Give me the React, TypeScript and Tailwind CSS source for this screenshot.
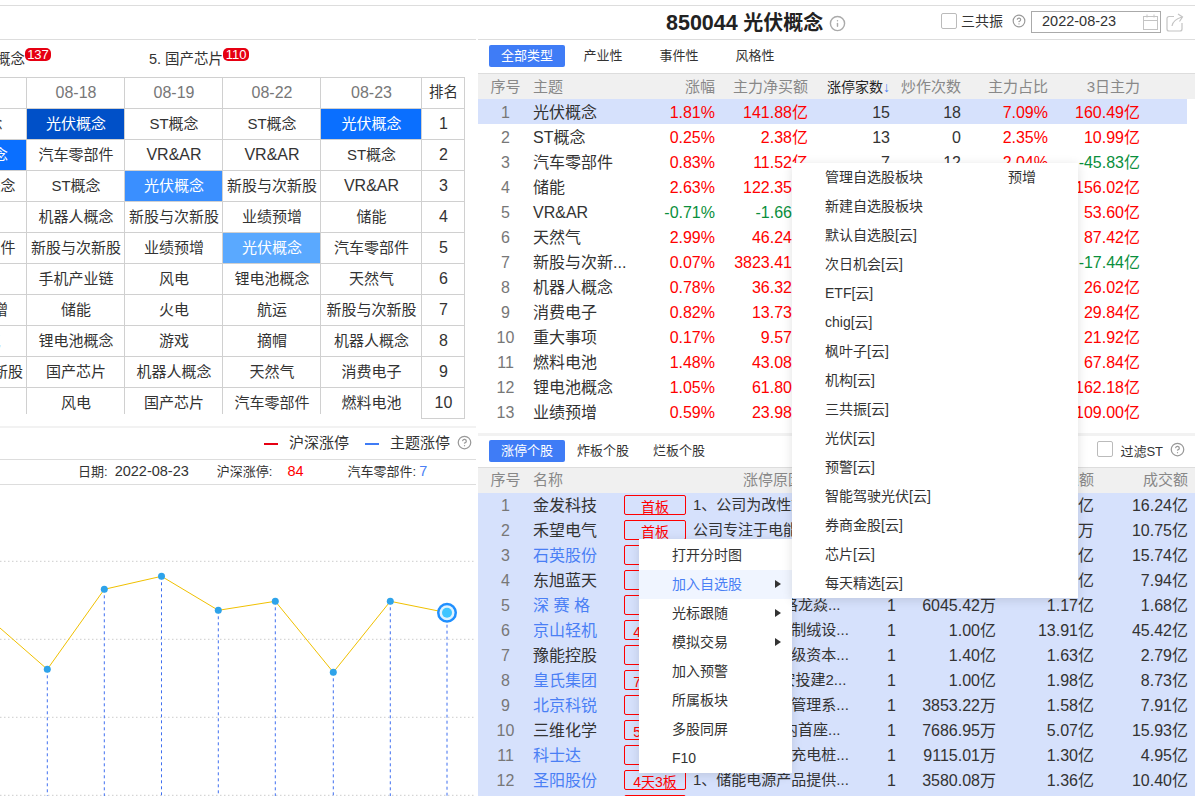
import React from 'react';
import { CircleHelp, Info } from 'lucide-react';

const RED = 'text-[#ff0000]';
const GREEN = 'text-[#0a8f3c]';
const BLUE = 'text-[#4a7ff5]';

const grid = [
  ['08-17', '08-18', '08-19', '08-22', '08-23', '排名'],
  ['ST概念', '光伏概念', 'ST概念', 'ST概念', '光伏概念', '1'],
  ['光伏概念', '汽车零部件', 'VR&AR', 'VR&AR', 'ST概念', '2'],
  ['锂电池概念', 'ST概念', '光伏概念', '新股与次新股', 'VR&AR', '3'],
  ['储能', '机器人概念', '新股与次新股', '业绩预增', '储能', '4'],
  ['汽车零部件', '新股与次新股', '业绩预增', '光伏概念', '汽车零部件', '5'],
  ['风电', '手机产业链', '风电', '锂电池概念', '天然气', '6'],
  ['业绩预增', '储能', '火电', '航运', '新股与次新股', '7'],
  ['天然气', '锂电池概念', '游戏', '摘帽', '机器人概念', '8'],
  ['新股与次新股', '国产芯片', '机器人概念', '天然气', '消费电子', '9'],
  ['火电', '风电', '国产芯片', '汽车零部件', '燃料电池', '10'],
];

const cellFill: Record<string, string> = {
  '1-1': 'bg-[#0050c8] text-white',
  '1-4': 'bg-[#0a6fff] text-white',
  '2-0': 'bg-[#0a6fff] text-white',
  '3-2': 'bg-[#3a8fff] text-white',
  '5-3': 'bg-[#5aa9ff] text-white',
};

const themes = [
  ['光伏概念', '1.81%', '141.88亿', '15', '18', '7.09%', '160.49亿'],
  ['ST概念', '0.25%', '2.38亿', '13', '0', '2.35%', '10.99亿'],
  ['汽车零部件', '0.83%', '11.52亿', '7', '12', '2.04%', '-45.83亿'],
  ['储能', '2.63%', '122.35亿', '6', '9', '3.12%', '156.02亿'],
  ['VR&AR', '-0.71%', '-1.66亿', '6', '0', '1.20%', '53.60亿'],
  ['天然气', '2.99%', '46.24亿', '5', '4', '2.66%', '87.42亿'],
  ['新股与次新...', '0.07%', '3823.41万', '5', '2', '0.30%', '-17.44亿'],
  ['机器人概念', '0.78%', '36.32亿', '4', '3', '1.41%', '26.02亿'],
  ['消费电子', '0.82%', '13.73亿', '4', '1', '1.02%', '29.84亿'],
  ['重大事项', '0.17%', '9.57亿', '4', '0', '0.85%', '21.92亿'],
  ['燃料电池', '1.48%', '43.08亿', '3', '5', '2.48%', '67.84亿'],
  ['锂电池概念', '1.05%', '61.80亿', '3', '8', '1.96%', '162.18亿'],
  ['业绩预增', '0.59%', '23.98亿', '3', '2', '1.11%', '109.00亿'],
];

const stocks = [
  ['金发科技', 0, '首板', '1、公司为改性塑料龙头', '1', '9856.20万', '2.14亿', '16.24亿'],
  ['禾望电气', 0, '首板', '公司专注于电能变换', '1', '8120.33万', '3512万', '10.75亿'],
  ['石英股份', 1, '首板', '公司高纯石英砂龙头', '1', '1.12亿', '2.06亿', '15.74亿'],
  ['东旭蓝天', 0, '首板', '公司布局光伏电站', '1', '7220.10万', '1.35亿', '7.94亿'],
  ['深 赛 格', 1, '首板', '公司参股苏州格龙焱...', '1', '6045.42万', '1.17亿', '1.68亿'],
  ['京山轻机', 1, '4天3板', '1、公司主营光制绒设...', '1', '1.00亿', '13.91亿', '45.42亿'],
  ['豫能控股', 0, '首板', '1、公司引入省级资本...', '1', '1.40亿', '1.63亿', '2.79亿'],
  ['皇氏集团', 1, '7天5板', '1、公司拟 在安投建2...', '1', '1.00亿', '1.98亿', '8.73亿'],
  ['北京科锐', 1, '首板', '1、公司布能源管理系...', '1', '3853.22万', '1.58亿', '7.91亿'],
  ['三维化学', 0, '5天3板', '公司承建了国内首座...', '1', '7686.95万', '5.07亿', '15.93亿'],
  ['科士达', 1, '首板', '1、公司布局储充电桩...', '1', '9115.01万', '1.30亿', '4.95亿'],
  ['圣阳股份', 1, '4天3板', '1、储能电源产品提供...', '1', '3580.08万', '1.36亿', '10.40亿'],
] as const;

const mainMenu = ['打开分时图', '加入自选股', '光标跟随', '模拟交易', '加入预警', '所属板块', '多股同屏', 'F10'];
const subMenu = ['管理自选股板块', '新建自选股板块', '默认自选股[云]', '次日机会[云]', 'ETF[云]', 'chig[云]', '枫叶子[云]', '机构[云]', '三共振[云]', '光伏[云]', '预警[云]', '智能驾驶光伏[云]', '券商金股[云]', '芯片[云]', '每天精选[云]'];

const points = [[47.3, 184.3], [104.3, 104.3], [161.5, 91.3], [218.3, 125.3], [275.3, 116.3], [333.3, 187.3], [390.3, 116.3], [447, 127.7]];

function signColor(v: string) {
  return v.startsWith('-') ? GREEN : RED;
}

function Badge({ count }: { count: string }) {
  return <span className="absolute left-full -top-[1px] h-[13px] w-[26px] rounded-[5px] bg-[#e60012] text-center text-[13px] leading-[13px] text-white">{count}</span>;
}

function Tabs({ items }: { items: string[] }) {
  return (
    <div className="flex">
      {items.map((t, i) => (
        <div key={t} className={`flex h-[22px] w-[76px] items-center justify-center rounded-[2px] text-[13px] ${i === 0 ? 'bg-[#3f7cf6] text-white' : 'text-[#333]'}`}>{t}</div>
      ))}
    </div>
  );
}

function CheckBox() {
  return <span className="mb-[3px] block h-[16px] w-[16px] rounded-[2px] border border-[#bbb] bg-white" />;
}

function Chart() {
  return (
    <svg width="476" height="311" className="block">
      {[76.3, 154.3, 232.3, 310.3].map(y => (
        <line key={y} x1="0" x2="476" y1={y} y2={y} stroke="#ccc" strokeDasharray="1.5 2.5" />
      ))}
      {points.map(([x, y]) => (
        <line key={x} x1={x} x2={x} y1={y} y2="311" stroke="#3f6ff0" strokeDasharray="3 3" />
      ))}
      <polyline points={`0,143 ${points.map(p => p.join(',')).join(' ')}`} fill="none" stroke="#f0c000" strokeWidth="1" />
      {points.slice(0, 7).map(([x, y]) => (
        <circle key={x} cx={x} cy={y} r="3.5" fill="#2ea3ea" />
      ))}
      <circle cx="447" cy="127.7" r="10" fill="#1f8fff" />
      <circle cx="447" cy="127.7" r="7.5" fill="#dff3ff" />
      <circle cx="447" cy="127.7" r="5" fill="#3fc5ff" />
    </svg>
  );
}

function LeftPanel() {
  return (
    <div className="flex w-[476px] flex-col overflow-hidden">
      <div className="h-[34px] shrink-0 border-b border-[#ddd]" />
      <div className="relative h-[37px] shrink-0 overflow-hidden text-[14.5px] text-[#333]">
        <span className="absolute right-[451px] top-[9px] whitespace-nowrap">4. 机器人概念<Badge count="137" /></span>
        <span className="absolute left-[149px] top-[9px] whitespace-nowrap">5. 国产芯片<Badge count="110" /></span>
      </div>
      <div className="ml-[-71px] h-[349px] shrink-0">
        <div className="grid w-[536px] grid-cols-[98px_98px_98px_98px_101px_43px] items-start border-t border-[#d0d0d0]">
          {grid.map((row, r) =>
            row.map((text, c) => {
              const isLast = r === 10;
              const isRank = c === 5;
              const head = r === 0 && !isRank;
              const wide = text === 'VR&AR';
              const size = head || wide || (isRank && r > 0) ? 'text-[16px]' : isRank ? 'text-[14.5px]' : 'text-[15px]';
              const fill = cellFill[`${r}-${c}`] ?? (head ? 'text-[#777]' : 'text-[#333]');
              const shape = isLast && !isRank ? 'h-[26px] pt-[4px] border-r' : 'h-[31px] items-center border-r border-b';
              return (
                <div key={`${r}-${c}`} className={`flex justify-center whitespace-nowrap border-[#d0d0d0] pl-[1px] ${shape} ${size} ${fill} ${isRank ? 'border-l border-l-[#d0d0d0] -ml-[1px]' : ''}`}>
                  {text}
                </div>
              );
            }),
          )}
        </div>
      </div>
      <div className="h-[2px] shrink-0 bg-[#f2f2f2]" />
      <div className="flex h-[32px] shrink-0 items-center justify-end border-b border-[#ddd] pr-[4px] text-[15px] text-[#333]">
        <span className="h-[2px] w-[14px] bg-[#e60012]" />
        <span className="ml-[11px]">沪深涨停</span>
        <span className="ml-[16px] h-[2px] w-[14px] bg-[#3f7cf6]" />
        <span className="ml-[11px]">主题涨停</span>
        <CircleHelp size={15} className="ml-[7px] mb-[3px] text-[#999]" />
      </div>
      <div className="flex h-[25px] shrink-0 items-center border-b border-[#ddd] pl-[78px] text-[13px] text-[#333]">
        <span>日期:</span>
        <span className="ml-[7px] text-[14.5px]">2022-08-23</span>
        <span className="ml-[28px]">沪深涨停:</span>
        <span className={`ml-[15px] text-[14.5px] ${RED}`}>84</span>
        <span className="ml-[44px]">汽车零部件:</span>
        <span className={`ml-[3px] text-[14.5px] ${BLUE}`}>7</span>
      </div>
      <Chart />
    </div>
  );
}

function ThemeTable() {
  const cols = 'grid grid-cols-[55px_92px_90px_93px_82px_71px_87px_92px] items-center pt-[2px]';
  return (
    <div className="h-[359px] shrink-0">
      <div className={`${cols} h-[25px] w-full bg-[#f0f0f0] text-[15px] text-[#888]`}>
        <span className="text-center">序号</span>
        <span>主题</span>
        <span className="text-right">涨幅</span>
        <span className="text-right">主力净买额</span>
        <span className="text-right text-[14px] text-[#222]">涨停家数<span className={`text-[14px] ${BLUE}`}>↓</span></span>
        <span className="text-right">炒作次数</span>
        <span className="text-right">主力占比</span>
        <span className="text-right">3日主力</span>
      </div>
      {themes.map((t, i) => (
        <div key={t[0]} className={`${cols} h-[25px] w-[709px] whitespace-nowrap text-[16px] text-[#333] ${i === 0 ? 'bg-[#d6e1fc]' : ''}`}>
          <span className="text-center text-[#777]">{i + 1}</span>
          <span>{t[0]}</span>
          <span className={`text-right ${signColor(t[1])}`}>{t[1]}</span>
          <span className={`text-right ${signColor(t[2])}`}>{t[2]}</span>
          <span className="text-right">{t[3]}</span>
          <span className="text-right">{t[4]}</span>
          <span className={`text-right ${signColor(t[5])}`}>{t[5]}</span>
          <span className={`text-right ${signColor(t[6])}`}>{t[6]}</span>
        </div>
      ))}
    </div>
  );
}

function StockTable() {
  const cols = 'grid grid-cols-[55px_91px_62px_166px_44px_100px_98px_94px_7px] items-center';
  return (
    <div>
      <div className={`${cols} h-[25px] bg-[#f0f0f0] text-[15px] text-[#888]`}>
        <span className="text-center">序号</span>
        <span>名称</span>
        <span />
        <span className="pl-[57px]">涨停原因</span>
        <span className="text-right">连板</span>
        <span className="text-right">封单额</span>
        <span className="text-right">流通额</span>
        <span className="text-right">成交额</span>
      </div>
      {stocks.map((s, i) => (
        <div key={s[0]} className={`${cols} h-[25px] whitespace-nowrap bg-[#d6e1fc] text-[16px] text-[#333]`}>
          <span className="text-center text-[#777]">{i + 1}</span>
          <span className={s[1] ? BLUE : ''}>{s[0]}</span>
          <span className={`mb-[1px] h-[20px] overflow-hidden rounded-[2px] border border-[#f00] text-center text-[14px] leading-[23px] ${RED}`}>{s[2]}</span>
          <span className="pl-[7px] text-[15px]">{s[3]}</span>
          <span className="text-right">{s[4]}</span>
          <span className="text-right">{s[5]}</span>
          <span className="text-right">{s[6]}</span>
          <span className="text-right">{s[7]}</span>
        </div>
      ))}
      <div className="h-[25px] bg-[#d6e1fc] pl-[146px] pt-[2px]">
        <div className="h-[20px] w-[62px] rounded-[2px] border border-[#f00]" />
      </div>
    </div>
  );
}

function RightPanel() {
  return (
    <div className="flex w-[717px] flex-col overflow-hidden">
      <div className="flex h-[34px] shrink-0 items-center border-b border-[#ddd] pr-[11px]">
        <span className="ml-[188px] whitespace-nowrap pt-[2px] text-[20px] font-bold text-[#222]"><span className="text-[21.5px]">850044</span> 光伏概念</span>
        <Info size={17} className="ml-[6px] mt-[2px] text-[#aaa]" />
        <div className="ml-auto flex items-center">
          <CheckBox />
          <span className="mb-[2px] ml-[4px] text-[14px] text-[#333]">三共振</span>
          <CircleHelp size={14} className="mb-[3px] ml-[9px] text-[#999]" />
          <div className="mb-[2px] ml-[5px] flex h-[22px] w-[130px] items-center justify-between border border-[#aaa] pl-[10px] pr-[2px] text-[14.5px] text-[#333]">
            2022-08-23
            <svg width="15" height="16" viewBox="0 0 15 16" fill="none" stroke="#c4c4c4">
              <rect x="0.5" y="2.5" width="14" height="13" />
              <path d="M0.5 6.5h14M4 0.5v3M11 0.5v3" />
            </svg>
          </div>
          <svg width="18" height="19" viewBox="0 0 18 19" fill="none" stroke="#c4c4c4" strokeWidth="1.2" className="ml-[5px]">
            <path d="M8 3.5H3a2 2 0 0 0-2 2v10.500a2 2 0 0 0 2 2h11a2 2 0 0 0 2-2V10" />
            <path d="M6 13c.5-4 3.500-7 10-9M12 1l4.500 3-3 4.500" />
          </svg>
        </div>
      </div>
      <div className="flex h-[34px] shrink-0 items-start border-b border-[#ddd] pl-[11px] pt-[5px]">
        <Tabs items={['全部类型', '产业性', '事件性', '风格性']} />
      </div>
      <ThemeTable />
      <div className="h-[3px] shrink-0 bg-[#f2f2f2]" />
      <div className="flex h-[32px] shrink-0 items-start justify-between border-b border-[#ddd] pl-[11px] pt-[4px]">
        <Tabs items={['涨停个股', '炸板个股', '烂板个股']} />
        <div className="flex items-center pr-[10px] text-[13px] text-[#333]">
          <CheckBox />
          <span className="ml-[7px] mt-[2px]">过滤ST</span>
          <CircleHelp size={15} className="mb-[3px] ml-[7px] text-[#999]" />
        </div>
      </div>
      <StockTable />
    </div>
  );
}

function Menus() {
  return (
    <>
      <div className="absolute left-[639px] top-[539px] w-[153px] bg-white pt-[1.500px] text-[14px] text-[#333] shadow-[0_2px_10px_rgba(0,0,0,0.12)]">
        {mainMenu.map((m, i) => (
          <div key={m} className={`relative flex h-[29px] items-center pl-[33px] ${i === 1 ? `bg-[#f0f5ff] ${BLUE}` : ''}`}>
            {m}
            {i >= 1 && i <= 3 && (
              <svg width="6" height="8" viewBox="0 0 6 8" className="absolute left-[136px] top-[10px]"><path d="M0 0l6 4-6 4z" fill="#333" /></svg>
            )}
          </div>
        ))}
      </div>
      <div className="absolute left-[792px] top-[163px] w-[286px] bg-white text-[14px] text-[#333] shadow-[0_2px_10px_rgba(0,0,0,0.12)]">
        {subMenu.map((m, i) => (
          <div key={m} className="flex h-[29px] items-center pl-[33px]">
            <span className="w-[183px]">{m}</span>
            {i === 0 && <span>预增</span>}
          </div>
        ))}
      </div>
    </>
  );
}

export default function App() {
  return (
    <div className="relative h-[796px] w-[1195px] overflow-hidden bg-white [font-family:'Liberation_Sans','Noto_Sans_CJK_SC',sans-serif]">
      <div className="h-[6px] border-b border-[#ddd]" />
      <div className="flex h-[790px] justify-between">
        <LeftPanel />
        <RightPanel />
      </div>
      <Menus />
    </div>
  );
}
